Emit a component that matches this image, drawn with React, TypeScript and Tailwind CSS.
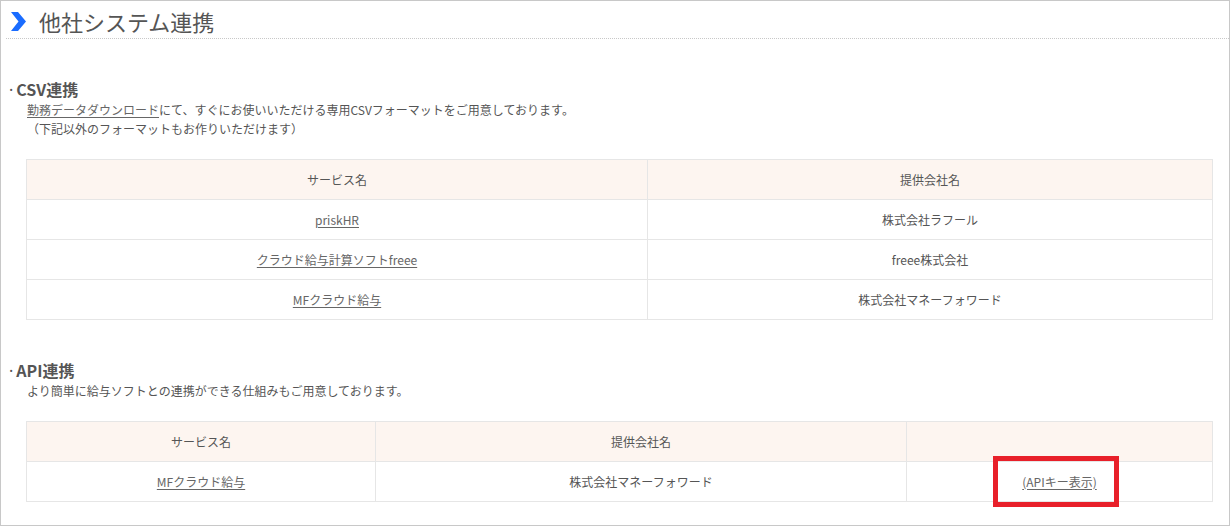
const jp = { fontFamily: '"Noto Sans CJK JP", "Noto Sans", sans-serif' }

function Chevron() {
  return (
    <svg width="15" height="19" viewBox="0 0 15 19" className="shrink-0">
      <path d="M0 0 L7 0 L15 9.5 L7 19 L0 19 L7.5 9.5 Z" fill="#1a6cff" />
    </svg>
  )
}

function Cell({ children, head, className = '' }: { children?: React.ReactNode; head?: boolean; className?: string }) {
  return (
    <td
      className={`h-[40px] border border-[#e6e6e6] text-center align-middle text-[12px] text-[#555] ${
        head ? 'bg-[#fdf5f0]' : 'bg-white'
      } ${className}`}
    >
      {children}
    </td>
  )
}

function Link({ children }: { children: React.ReactNode }) {
  return <a className="text-[#666] underline underline-offset-2 decoration-[#666]">{children}</a>
}

function Heading({ children }: { children: React.ReactNode }) {
  return (
    <h2 className="ml-[8px] text-[16px] font-bold leading-[20px]">
      <span className="mr-[3px] font-normal" style={{ fontFamily: '"Noto Sans", sans-serif' }}>·</span>
      {children}
    </h2>
  )
}

export default function App() {
  return (
    <div style={jp} className="relative w-[1230px] h-[526px] border border-[#c8c8c8] bg-white text-[#555]">
      <div className="ml-[5px] h-[38px] border-b border-dotted border-[#c8c8c8] flex items-center gap-[13px] pl-[5px] pt-[3px]">
        <Chevron />
        <h1 className="text-[22px] leading-none text-[#555]">他社システム連携</h1>
      </div>

      <section className="mt-[40px]">
        <Heading>CSV連携</Heading>
        <p className="ml-[26px] text-[12px] leading-[19px]">
          <Link>勤務データダウンロード</Link>にて、すぐにお使いいただける専用CSVフォーマットをご用意しております。
          <br />
          （下記以外のフォーマットもお作りいただけます）
        </p>
        <table className="ml-[25px] mt-[21px] w-[1187px] border-collapse">
          <colgroup>
            <col className="w-[621px]" />
            <col />
          </colgroup>
          <tbody>
            <tr>
              <Cell head>サービス名</Cell>
              <Cell head>提供会社名</Cell>
            </tr>
            <tr>
              <Cell><Link>priskHR</Link></Cell>
              <Cell>株式会社ラフール</Cell>
            </tr>
            <tr>
              <Cell><Link>クラウド給与計算ソフトfreee</Link></Cell>
              <Cell>freee株式会社</Cell>
            </tr>
            <tr>
              <Cell><Link>MFクラウド給与</Link></Cell>
              <Cell>株式会社マネーフォワード</Cell>
            </tr>
          </tbody>
        </table>
      </section>

      <section className="mt-[40px]">
        <Heading>API連携</Heading>
        <p className="ml-[26px] text-[12px] leading-[19px]">より簡単に給与ソフトとの連携ができる仕組みもご用意しております。</p>
        <table className="ml-[25px] mt-[21px] w-[1187px] border-collapse">
          <colgroup>
            <col className="w-[349px]" />
            <col className="w-[531px]" />
            <col />
          </colgroup>
          <tbody>
            <tr>
              <Cell head>サービス名</Cell>
              <Cell head>提供会社名</Cell>
              <Cell head />
            </tr>
            <tr>
              <Cell><Link>MFクラウド給与</Link></Cell>
              <Cell>株式会社マネーフォワード</Cell>
              <Cell><Link>(APIキー表示)</Link></Cell>
            </tr>
          </tbody>
        </table>
      </section>

      <div className="absolute left-[992px] top-[455px] w-[126px] h-[51px] border-[5px] border-[#e8202a]" />
    </div>
  )
}
